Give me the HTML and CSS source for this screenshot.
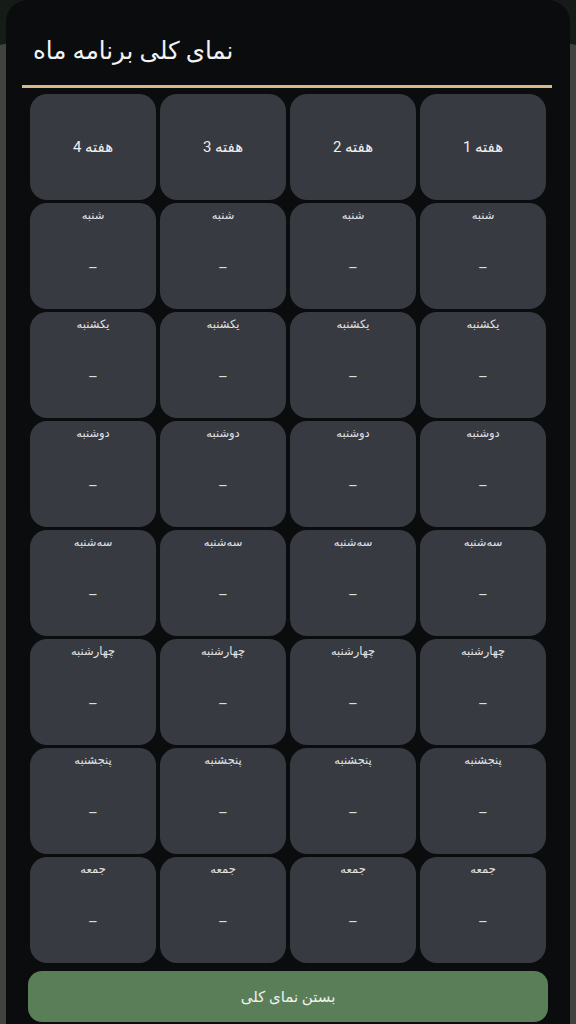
FILE: index.html
```html
<!DOCTYPE html>
<html lang="fa">
<head>
<meta charset="utf-8">
<title>نمای کلی برنامه ماه</title>
<link rel="stylesheet" href="styles.css">
</head>
<body>
<div class="backdrop"></div>
<div class="sheet">
  <h1 class="title">نمای کلی برنامه ماه</h1>
  <div class="divider"></div>
  <div class="grid">
    <div class="cell head">هفته 1</div>
    <div class="cell head">هفته 2</div>
    <div class="cell head">هفته 3</div>
    <div class="cell head">هفته 4</div>

    <div class="cell day"><span class="lbl">شنبه</span><span class="dash">–</span></div>
    <div class="cell day"><span class="lbl">شنبه</span><span class="dash">–</span></div>
    <div class="cell day"><span class="lbl">شنبه</span><span class="dash">–</span></div>
    <div class="cell day"><span class="lbl">شنبه</span><span class="dash">–</span></div>

    <div class="cell day"><span class="lbl">یکشنبه</span><span class="dash">–</span></div>
    <div class="cell day"><span class="lbl">یکشنبه</span><span class="dash">–</span></div>
    <div class="cell day"><span class="lbl">یکشنبه</span><span class="dash">–</span></div>
    <div class="cell day"><span class="lbl">یکشنبه</span><span class="dash">–</span></div>

    <div class="cell day"><span class="lbl">دوشنبه</span><span class="dash">–</span></div>
    <div class="cell day"><span class="lbl">دوشنبه</span><span class="dash">–</span></div>
    <div class="cell day"><span class="lbl">دوشنبه</span><span class="dash">–</span></div>
    <div class="cell day"><span class="lbl">دوشنبه</span><span class="dash">–</span></div>

    <div class="cell day"><span class="lbl">سه‌شنبه</span><span class="dash">–</span></div>
    <div class="cell day"><span class="lbl">سه‌شنبه</span><span class="dash">–</span></div>
    <div class="cell day"><span class="lbl">سه‌شنبه</span><span class="dash">–</span></div>
    <div class="cell day"><span class="lbl">سه‌شنبه</span><span class="dash">–</span></div>

    <div class="cell day"><span class="lbl">چهارشنبه</span><span class="dash">–</span></div>
    <div class="cell day"><span class="lbl">چهارشنبه</span><span class="dash">–</span></div>
    <div class="cell day"><span class="lbl">چهارشنبه</span><span class="dash">–</span></div>
    <div class="cell day"><span class="lbl">چهارشنبه</span><span class="dash">–</span></div>

    <div class="cell day"><span class="lbl">پنجشنبه</span><span class="dash">–</span></div>
    <div class="cell day"><span class="lbl">پنجشنبه</span><span class="dash">–</span></div>
    <div class="cell day"><span class="lbl">پنجشنبه</span><span class="dash">–</span></div>
    <div class="cell day"><span class="lbl">پنجشنبه</span><span class="dash">–</span></div>

    <div class="cell day"><span class="lbl">جمعه</span><span class="dash">–</span></div>
    <div class="cell day"><span class="lbl">جمعه</span><span class="dash">–</span></div>
    <div class="cell day"><span class="lbl">جمعه</span><span class="dash">–</span></div>
    <div class="cell day"><span class="lbl">جمعه</span><span class="dash">–</span></div>
  </div>
  <button class="close">بستن نمای کلی</button>
</div>
</body>
</html>
```

FILE: styles.css
```css
html, body {
  margin: 0;
  padding: 0;
}
body {
  width: 576px;
  height: 1024px;
  overflow: hidden;
  background: #151b16;
  font-family: Roboto, "DejaVu Sans", sans-serif;
  color: #eceeee;
  position: relative;
}
.backdrop {
  position: absolute;
  left: -12px;
  right: -12px;
  top: 44px;
  bottom: 0;
  background: #414341;
  border-radius: 18px 18px 0 0;
}
.sheet {
  position: relative;
  margin: 0 6px;
  height: 1024px;
  background: #0b0c0d;
  border-radius: 22px 22px 0 0;
  box-sizing: border-box;
  padding-top: 34px;
}
.title {
  margin: 0;
  padding-left: 27px;
  font-size: 24.5px;
  font-weight: normal;
  line-height: 34px;
  direction: rtl;
  text-align: left;
  color: #f2f2f2;
}
.divider {
  margin: 17px 18px 0 16px;
  height: 3px;
  background: #d8b788;
}
.grid {
  direction: rtl;
  margin: 6px 24px 0 24px;
  display: grid;
  grid-template-columns: repeat(4, 126px);
  grid-auto-rows: 106px;
  column-gap: 4px;
  row-gap: 3px;
}
.cell {
  background: #373a41;
  border-radius: 17px;
  display: flex;
  flex-direction: column;
  align-items: center;
}
.head {
  justify-content: center;
  font-size: 15px;
  color: #eeeeee;
}
.day .lbl {
  font-size: 11.5px;
  line-height: 18px;
  padding-top: 3px;
  color: #e2e3e5;
}
.day .dash {
  flex: 1;
  display: flex;
  align-items: center;
  padding-top: 2px;
  font-size: 15px;
  color: #dadcde;
}
.close {
  display: block;
  margin: 8px 22px 0 22px;
  width: 520px;
  height: 51px;
  border: none;
  border-radius: 14px;
  background: #5a7f58;
  color: #eef2ee;
  font-family: Roboto, "DejaVu Sans", sans-serif;
  font-size: 15px;
  direction: rtl;
}
```
